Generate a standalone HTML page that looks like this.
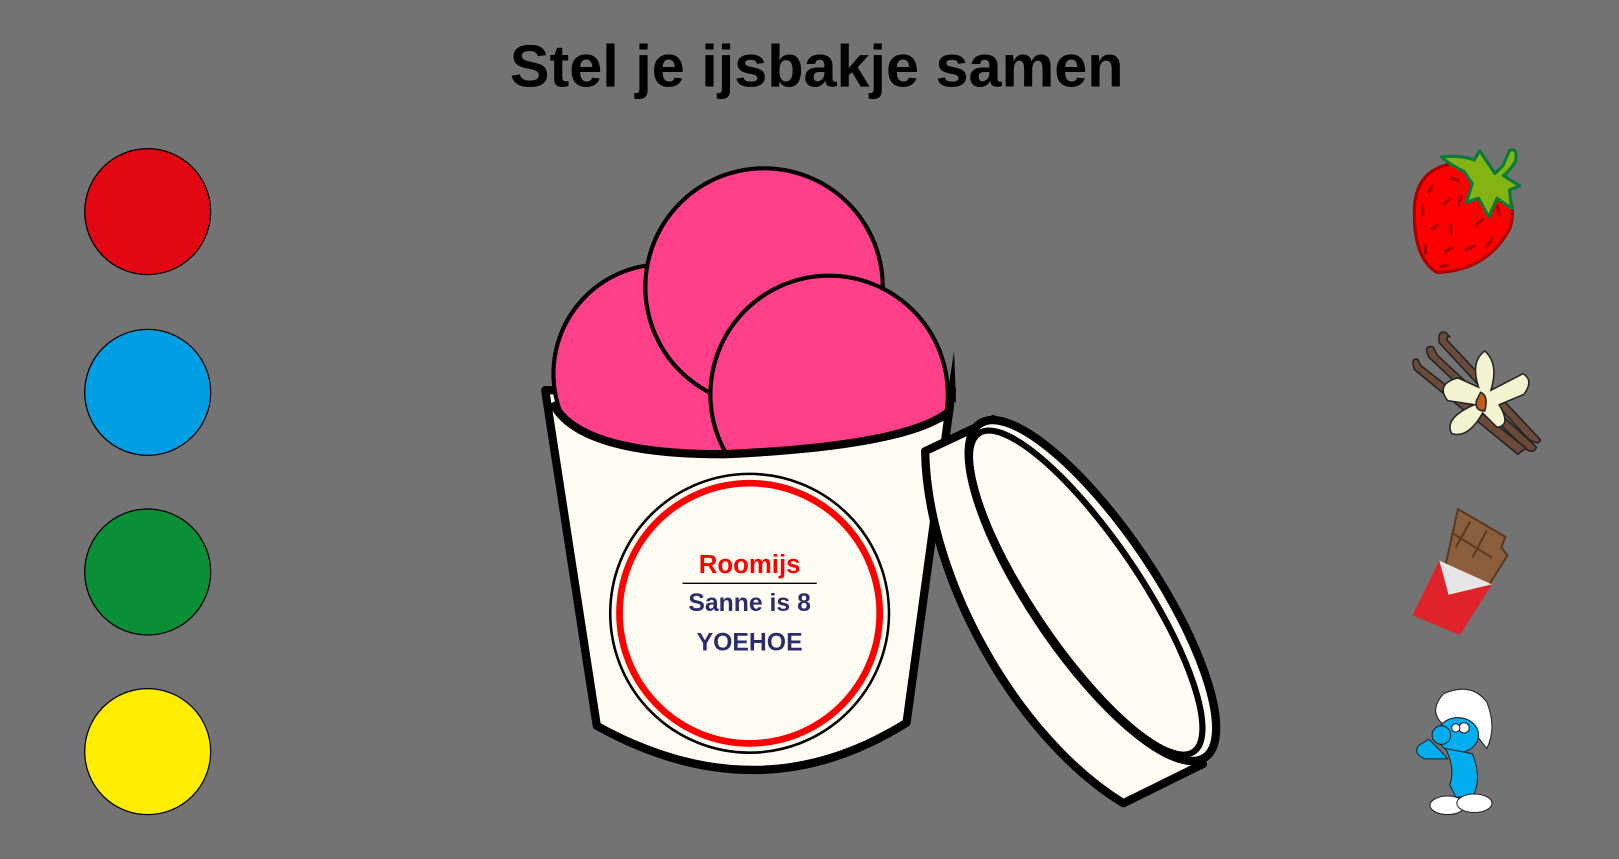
<!DOCTYPE html>
<html><head><meta charset="utf-8"><style>
html,body{margin:0;padding:0;background:#737373;}
svg{display:block}
</style></head><body>
<svg width="1619" height="859" viewBox="0 0 1568 832" xmlns="http://www.w3.org/2000/svg">
<rect width="1568" height="832" fill="#737373"/>
<text x="791" y="84" text-anchor="middle" font-family="Liberation Sans, Arial, sans-serif" font-weight="bold" font-size="57.5" fill="#000">Stel je ijsbakje samen</text>

<circle cx="143" cy="205" r="61" fill="#e30613" stroke="#000" stroke-width="1.2"/>
<circle cx="143" cy="380" r="61" fill="#009fe3" stroke="#000" stroke-width="1.2"/>
<circle cx="143" cy="554" r="61" fill="#0a8f37" stroke="#000" stroke-width="1.2"/>
<circle cx="143" cy="728" r="61" fill="#ffed00" stroke="#000" stroke-width="1.2"/>

<!-- cup -->
<path d="M528,378 L578,703 Q735,790 878,700 L922,378 Z" fill="#fffdf3" stroke="#000" stroke-width="8" stroke-linejoin="round"/>
<defs><clipPath id="c"><path d="M500,0 L940,0 L940,392 Q900,430 700,440 Q560,440 535,392 Z"/></clipPath></defs>
<g clip-path="url(#c)" fill="#ff3f8a" stroke="#000" stroke-width="4">
  <circle cx="642" cy="362" r="106"/>
  <circle cx="740" cy="278" r="115"/>
  <circle cx="803" cy="382" r="115"/>
</g>
<path d="M535,390 Q560,440 700,440 Q880,432 920,398" fill="none" stroke="#000" stroke-width="8"/>
<path d="M918,380 L924,340 L926,390 Z" fill="#000"/>

<!-- label -->
<circle cx="726" cy="594" r="135" fill="#fffdf3" stroke="#000" stroke-width="2.5"/>
<circle cx="726" cy="594" r="126" fill="none" stroke="#ff0000" stroke-width="6.5"/>
<g font-family="Liberation Sans, Arial, sans-serif" font-weight="bold" text-anchor="middle">
<text x="726" y="555" font-size="25" fill="#ff0000">Roomijs</text>
<line x1="661" y1="565" x2="791" y2="565" stroke="#000" stroke-width="1.3"/>
<text x="726" y="592" font-size="24" fill="#2b2d6a">Sanne is 8</text>
<text x="726" y="630" font-size="24" fill="#2b2d6a">YOEHOE</text>
</g>

<!-- lid (in front of cup) -->
<g stroke="#000" stroke-linejoin="round">
  <path d="M962,406 L896,437 C898,560 985,715 1088,778 L1165,740 Z" fill="#fffdf3" stroke-width="8"/>
  <ellipse cx="1058" cy="572" rx="195" ry="60" transform="rotate(56 1058 572)" fill="#fffdf3" stroke-width="8"/>
  <ellipse cx="1052" cy="574" rx="186" ry="52" transform="rotate(56 1052 574)" fill="none" stroke-width="6"/>
</g>

<!-- strawberry -->
<g>
<path d="M1400,160 Q1372,168 1370,200 Q1368,250 1392,264 Q1440,262 1462,222 Q1470,200 1455,178 Q1430,150 1400,160 Z" fill="#ff0000" stroke="#a00" stroke-width="3"/>
<g stroke="#a00" stroke-width="3" stroke-linecap="round">
<line x1="1387" y1="180" x2="1384" y2="186"/><line x1="1405" y1="172" x2="1412" y2="175"/>
<line x1="1378" y1="200" x2="1378" y2="208"/><line x1="1398" y1="198" x2="1404" y2="193"/>
<line x1="1415" y1="190" x2="1413" y2="198"/><line x1="1387" y1="222" x2="1392" y2="218"/>
<line x1="1405" y1="218" x2="1405" y2="226"/><line x1="1380" y1="238" x2="1381" y2="246"/>
<line x1="1400" y1="244" x2="1406" y2="240"/><line x1="1430" y1="218" x2="1436" y2="212"/>
<line x1="1445" y1="232" x2="1440" y2="238"/><line x1="1420" y1="242" x2="1428" y2="238"/>
<line x1="1395" y1="258" x2="1402" y2="257"/><line x1="1450" y1="200" x2="1452" y2="208"/>
</g>
<path d="M1396,152 Q1415,150 1428,155 L1433,146 L1448,168 L1456,160 Q1460,150 1462,146 Q1470,142 1468,156 Q1462,166 1456,170 L1472,180 L1462,184 L1464,202 L1450,192 L1442,210 L1432,192 L1420,196 L1426,178 L1418,166 Q1405,160 1396,152 Z" fill="#84b414" stroke="#0a7a3a" stroke-width="3" stroke-linejoin="round"/>
</g>

<!-- vanilla -->
<g stroke="#222" stroke-width="1.5">
<path d="M1400,322 Q1392,320 1394,332 L1480,425 Q1490,432 1492,426 L1402,330 Q1400,326 1404,326 Z" fill="#6b4a3a"/>
<path d="M1388,336 Q1378,334 1384,346 L1478,435 Q1486,440 1488,433 L1392,344 Z" fill="#6b4a3a"/>
<path d="M1373,348 Q1366,346 1370,358 L1470,440 L1478,434 L1376,354 Z" fill="#6b4a3a"/>
<path d="M1438,340 Q1452,352 1444,378 L1475,362 Q1486,368 1476,382 L1452,392 Q1464,412 1450,414 L1436,400 Q1422,425 1406,420 Q1398,405 1428,392 L1402,388 Q1390,372 1412,366 L1432,375 Q1424,350 1438,340 Z" fill="#f4f3d0"/>
<path d="M1434,380 Q1442,383 1438,398 Q1428,398 1430,388 Z" fill="#c15a1a"/>
</g>

<!-- chocolate -->
<g>
<path d="M1412,493 L1458,520 L1454,530 L1460,538 L1440,570 L1400,548 Z" fill="#8b5e3c" stroke="#5a3a20" stroke-width="2"/>
<g stroke="#5a3a20" stroke-width="2" fill="none">
<path d="M1406,516 L1445,540"/><path d="M1424,505 L1410,530"/><path d="M1440,514 L1426,540"/>
</g>
<path d="M1394,543 L1445,566 L1414,615 L1368,596 Z" fill="#e0232a"/>
<path d="M1394,543 L1445,566 L1403,576 Z" fill="#e6e6e6"/>
</g>

<!-- smurf -->
<g stroke="#222" stroke-width="1">
<path d="M1396,700 Q1384,688 1398,672 Q1425,660 1440,680 Q1450,705 1440,725 L1430,712 L1400,710 Z" fill="#fff"/>
<ellipse cx="1412" cy="712" rx="20" ry="17" fill="#00adef"/>
<circle cx="1396" cy="712" r="9" fill="#00adef"/>
<path d="M1400,725 Q1410,745 1404,760 L1410,772 L1426,772 Q1436,755 1426,730 Z" fill="#00adef"/>
<path d="M1402,735 L1380,735 Q1368,730 1374,722 L1384,716 L1396,728 Z" fill="#00adef"/>
<ellipse cx="1402" cy="780" rx="17" ry="9" fill="#fff"/>
<ellipse cx="1428" cy="778" rx="17" ry="9" fill="#fff"/>
<circle cx="1418" cy="705" r="5" fill="#fff"/>
<circle cx="1410" cy="705" r="4" fill="#fff"/>
</g>
</svg>
</body></html>
